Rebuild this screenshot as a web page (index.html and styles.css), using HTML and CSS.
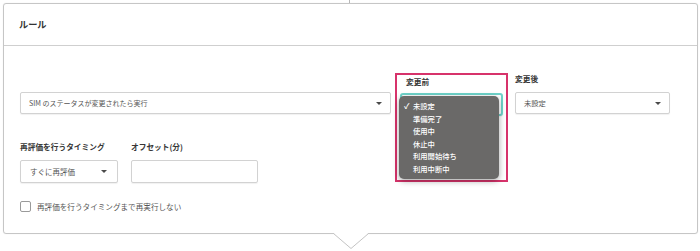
FILE: index.html
```html
<!DOCTYPE html>
<html lang="ja">
<head>
<meta charset="utf-8">
<link rel="stylesheet" href="styles.css">
</head>
<body>
<div class="prev-tip"></div>
<section class="card">
  <header class="card-head">ルール</header>
  <div class="card-body">
    <div class="row row-status">
      <div class="select select-main">
        <span>SIM のステータスが変更されたら実行</span><span class="caret"></span>
      </div>
      <div class="highlight">
        <div class="label label-in">変更前</div>
        <div class="select select-focus">
          <ul class="menu">
            <li class="checked">未設定</li>
            <li>準備完了</li>
            <li>使用中</li>
            <li>休止中</li>
            <li>利用開始待ち</li>
            <li>利用中断中</li>
          </ul>
        </div>
      </div>
      <div class="field field-after">
        <div class="label">変更後</div>
        <div class="select select-after"><span>未設定</span><span class="caret"></span></div>
      </div>
    </div>
    <div class="row row-timing">
      <div class="field">
        <div class="label">再評価を行うタイミング</div>
        <div class="select select-timing"><span>すぐに再評価</span><span class="caret"></span></div>
      </div>
      <div class="field">
        <div class="label">オフセット(分)</div>
        <div class="input"></div>
      </div>
    </div>
    <label class="check-row">
      <span class="checkbox"></span>
      <span>再評価を行うタイミングまで再実行しない</span>
    </label>
  </div>
  <svg class="down-arrow" width="36" height="18" viewBox="0 0 36 18">
    <polygon points="1,0 35,0 35,1.5 18,16.5 1,1.5" fill="#fff"/>
    <polyline points="0.5,1.5 18,16.5 35.5,1.5" fill="none" stroke="#c4c4c4" stroke-width="1"/>
  </svg>
</section>
</body>
</html>
```
FILE: styles.css
```css
* { box-sizing: border-box; }
html, body { margin: 0; padding: 0; background: #fff; }
body {
  width: 700px;
  height: 251px;
  position: relative;
  overflow: hidden;
  font-family: "Noto Sans CJK JP", "Noto Sans", sans-serif;
  color: #444;
}
.prev-tip {
  position: absolute;
  left: 349px;
  top: 0;
  width: 1px;
  height: 3px;
  background: #b8b8b8;
}
.card {
  position: relative;
  margin: 3px 0 0 3px;
  width: 695px;
  height: 231px;
  border: 1px solid #c6c6c6;
  border-radius: 3px;
  box-shadow: 0 0 1px rgba(0,0,0,0.15);
}
.card-head {
  height: 42px;
  padding-left: 15px;
  border-bottom: 1px solid #cfcfcf;
  font-size: 9.2px;
  font-weight: 700;
  line-height: 41px;
  color: #333;
}
.card-body {
  padding: 27px 0 0 16px;
}
.row { display: flex; }
.row-status {
  height: 41px;
  align-items: flex-end;
}
.label {
  font-size: 7.7px;
  font-weight: 700;
  line-height: 10px;
  color: #363636;
  margin-bottom: 8px;
}
.select {
  position: relative;
  display: flex;
  align-items: center;
  justify-content: space-between;
  height: 22px;
  padding: 0 8px 0 8px;
  border: 1px solid #d2d2d2;
  border-radius: 2px;
  font-size: 7.3px;
  color: #555;
  background: #fff;
  box-shadow: 0 1px 1px rgba(0,0,0,0.06);
}
.caret {
  width: 0;
  height: 0;
  border-left: 3px solid transparent;
  border-right: 3px solid transparent;
  border-top: 3.5px solid #4a4a4a;
}
.select-main { width: 371px; font-size: 7px; }
.highlight {
  align-self: flex-start;
  margin-left: 4px;
  width: 113px;
  height: 109px;
  flex: none;
  border: 2px solid #d7336b;
  padding: 0 3px;
}
.label-in {
  margin: 2px 0 6px 6px;
}
.select-focus {
  height: 23px;
  border: 2px solid #6fd3ca;
  border-radius: 3px;
}
.menu {
  position: absolute;
  left: -3px;
  top: 1px;
  width: 100px;
  margin: 0;
  padding: 4px 0;
  list-style: none;
  background: #6a6968;
  border-radius: 5px;
  box-shadow: 0 2px 6px rgba(0,0,0,0.35);
  z-index: 2;
}
.menu li {
  position: relative;
  padding-left: 14px;
  font-size: 7.3px;
  font-weight: 500;
  line-height: 12.5px;
  color: #fff;
}
.menu li.checked::before {
  content: "✓";
  position: absolute;
  left: 5px;
  top: 0;
  font-size: 7.5px;
  font-weight: 700;
}
.field { display: flex; flex-direction: column; }
.field-after { margin-left: 7px; }
.select-after { width: 155px; }
.row-timing {
  margin-top: 28px;
  gap: 13px;
}
.select-timing {
  width: 98px;
  height: 23px;
  padding-left: 9px;
  padding-right: 10px;
  font-size: 7.5px;
}
.input {
  width: 127px;
  height: 23px;
  border: 1px solid #d2d2d2;
  border-radius: 2px;
  box-shadow: 0 1px 1px rgba(0,0,0,0.06);
}
.check-row {
  display: flex;
  align-items: center;
  gap: 6px;
  margin-top: 18px;
  font-size: 7.6px;
  color: #555;
}
.checkbox {
  width: 11px;
  height: 11px;
  border: 1px solid #9a9a9a;
  border-radius: 2px;
  background: #fff;
}
.down-arrow {
  position: absolute;
  left: 329px;
  top: 228px;
}
```
